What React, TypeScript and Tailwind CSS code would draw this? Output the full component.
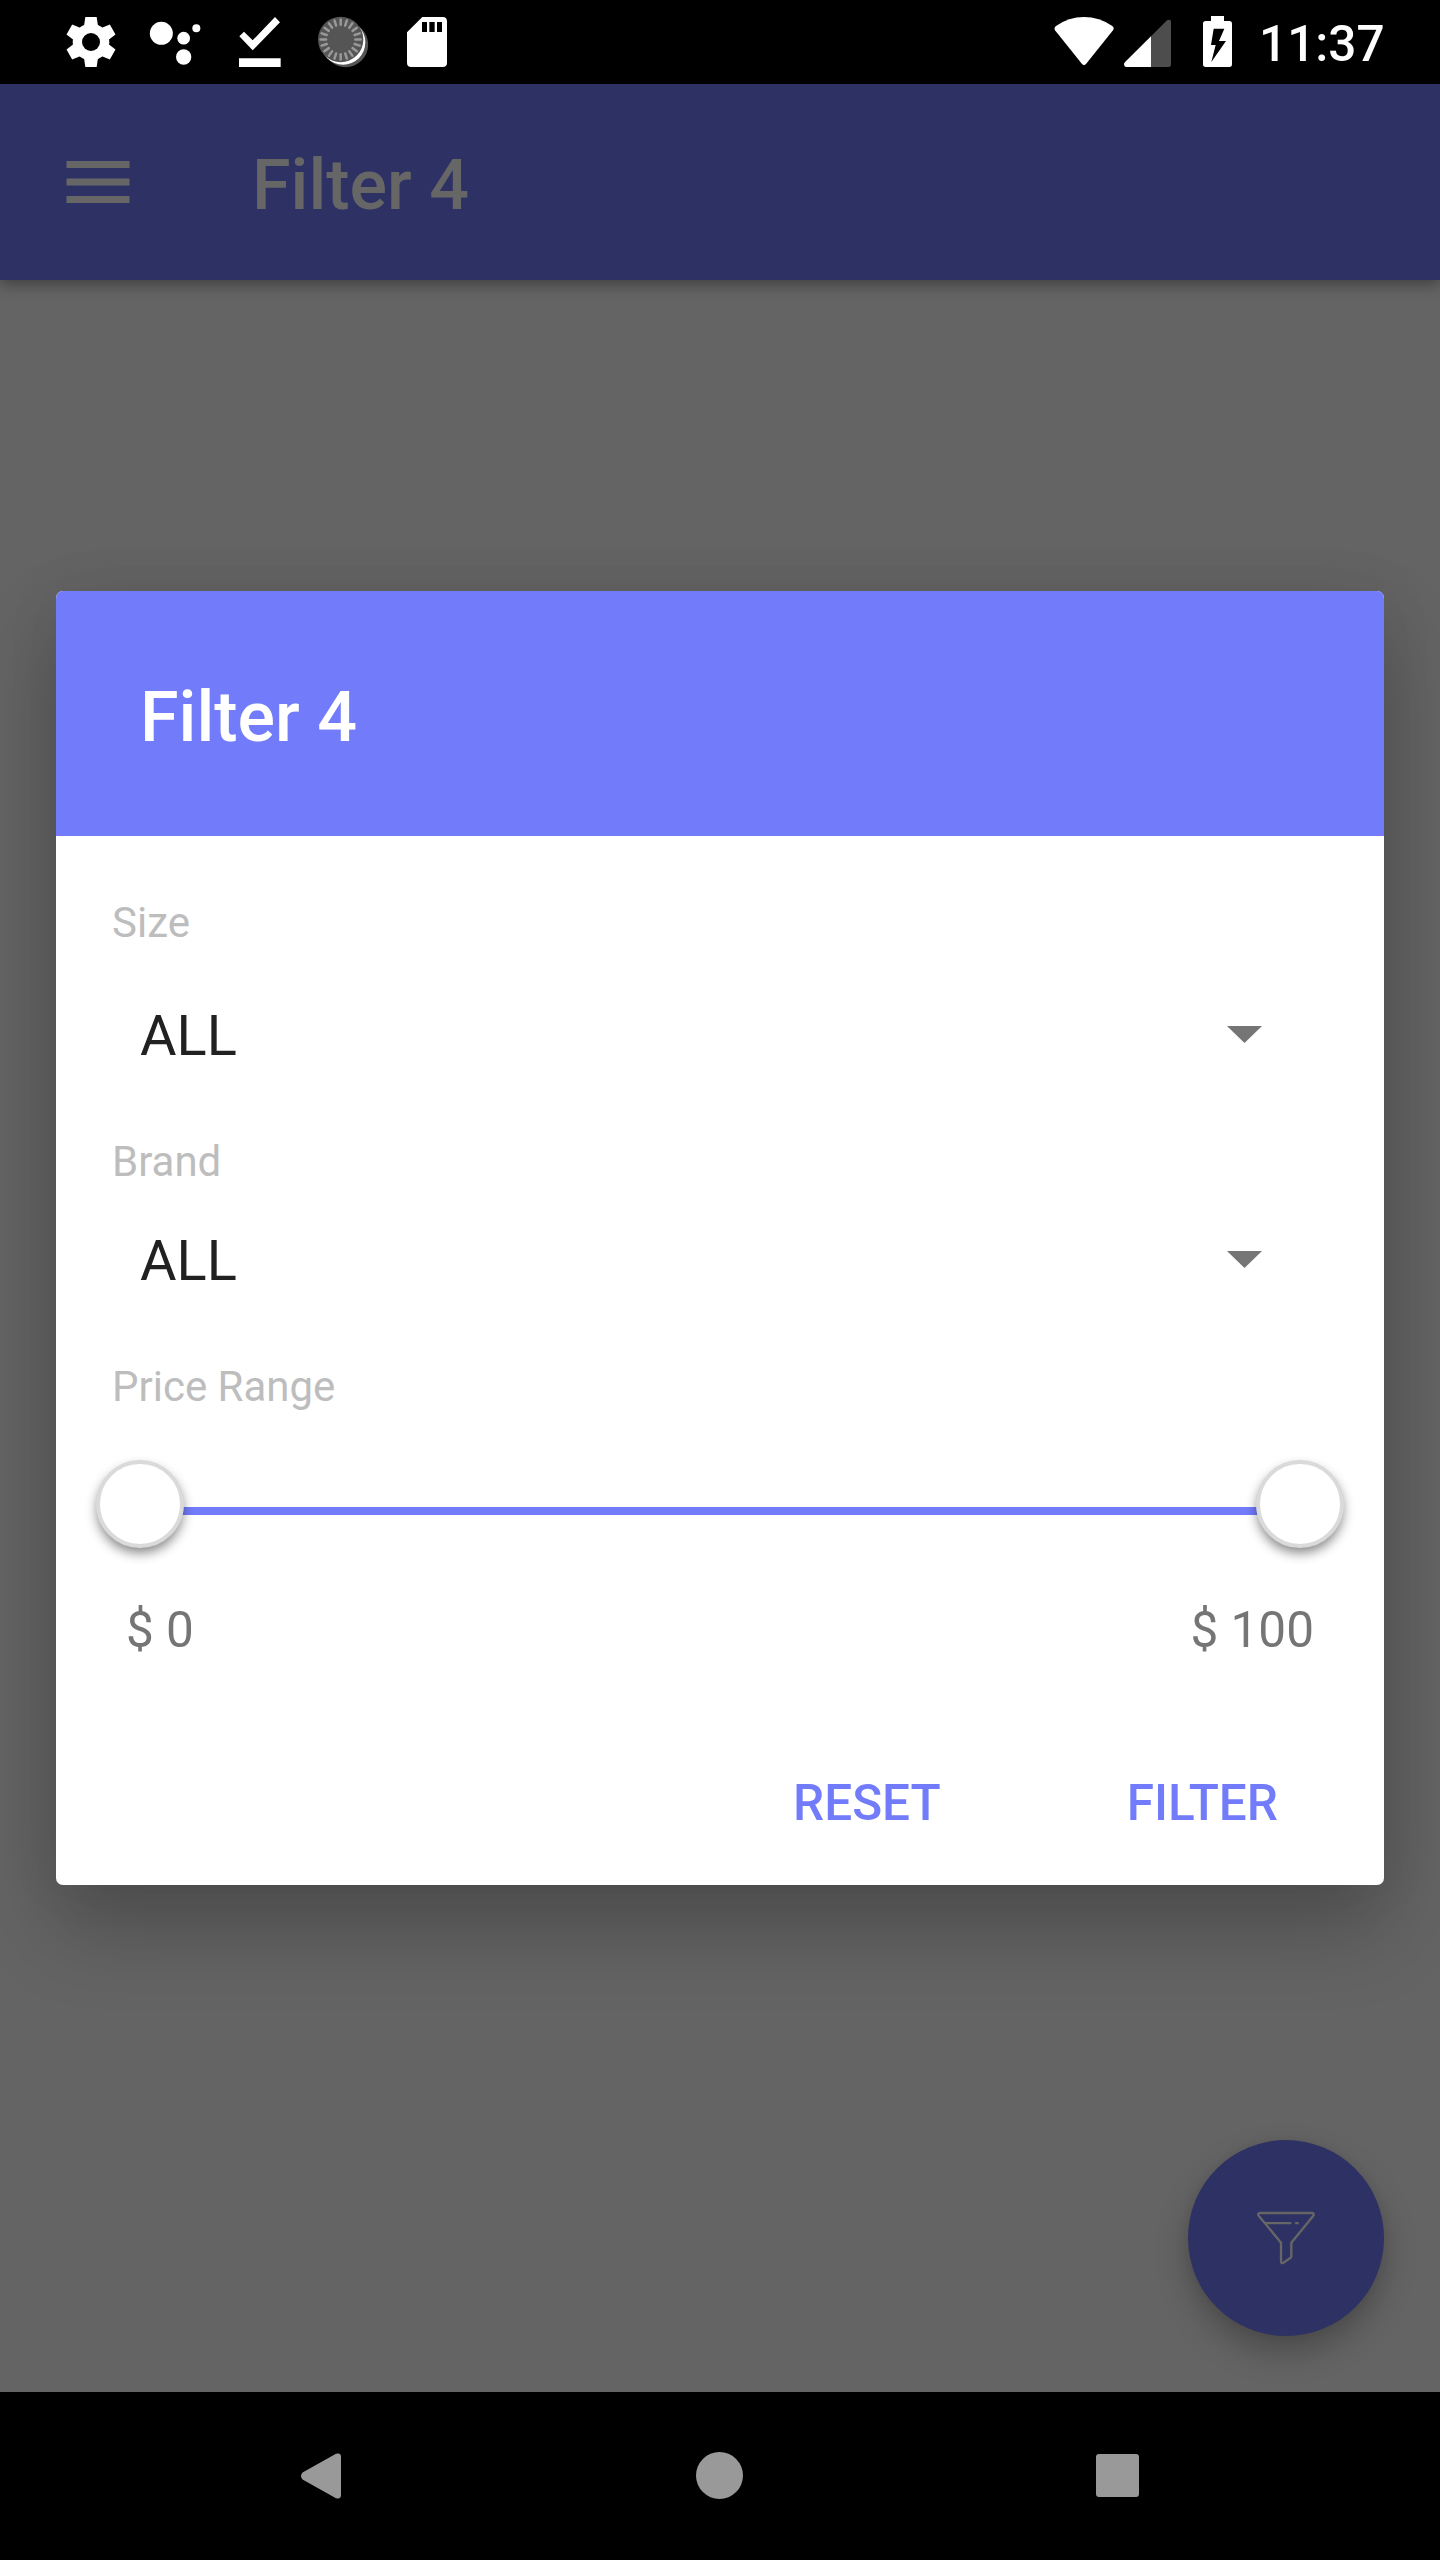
import React from "react";

const TOOTH = "-17,-75 17,-75 21,-48 21,48 17,75 -17,75 -21,48 -21,-48";

function StatusBar() {
  return (
    <header className="flex h-[84px] shrink-0 items-start justify-between bg-black text-white">
      <div className="flex pl-[66px] pt-[16px]">
        {/* settings */}
        <svg className="h-[52px] w-[52px]" viewBox="78 48 156 156">
          <g transform="translate(153 126)" fill="#fff">
            <circle r="55" />
            <polygon points={TOOTH} />
            <polygon points={TOOTH} transform="rotate(60)" />
            <polygon points={TOOTH} transform="rotate(120)" />
            <circle r="27" fill="#000" />
          </g>
        </svg>
        {/* assistant */}
        <svg className="ml-[31px] h-[52px] w-[52px]" viewBox="327 48 156 156" fill="#fff">
          <circle cx="364" cy="100" r="34.5" />
          <circle cx="431" cy="114.500" r="19" />
          <circle cx="431" cy="171" r="23" />
          <circle cx="469" cy="84.500" r="12" />
        </svg>
        {/* download done */}
        <svg className="ml-[36px] h-[52px] w-[52px]" viewBox="591 48 156 156" fill="#fff">
          <path d="M598 109L612 95L638 121L705 51L720 67L638 151ZM597 175H722V201H597Z" />
        </svg>
        {/* sync spinner */}
        <svg className="ml-[28px] h-[52px] w-[52px]" viewBox="831 48 156 156">
          <circle cx="917" cy="134" r="67.500" fill="#555" />
          <circle cx="909" cy="127" r="67" fill="#fff" />
          <circle cx="902" cy="118.500" r="68" fill="#555" />
          <g transform="translate(902 118.500)" stroke="#999" strokeWidth="7.500" strokeLinecap="round">
            {Array.from({ length: 20 }, (_, i) => (
              <path key={i} d="M0-60V-44" transform={`rotate(${i * 18})`} />
            ))}
          </g>
        </svg>
        {/* sd card */}
        <svg className="ml-[37px] h-[52px] w-[52px]" viewBox="1098 48 156 156">
          <path
            fill="#fff"
            fillRule="evenodd"
            d="M1147 51H1208Q1221 51 1221 64V188Q1221 201 1208 201H1114Q1101 201 1101 188V97ZM1146 66V96H1161V66ZM1168 66V96H1184V66ZM1191 66V96H1206V66Z"
          />
        </svg>
      </div>
      <div className="flex pr-[56px] pt-[15px]">
        {/* wifi */}
        <svg className="h-[54px] w-[62px]" viewBox="69 45 186 162" fill="#fff">
          <path d="M75 91Q71 84 78 78Q116 51 162 51Q208 51 247 78Q254 84 249 91L168 192Q162 199 156 192Z" />
        </svg>
        {/* cell signal */}
        <svg className="ml-[8px] h-[54px] w-[50px]" viewBox="279 45 150 162">
          <path fill="#4d4d4d" d="M363 109L411 61Q423 55 423 66V194Q423 201 416 201H363Z" />
          <path fill="#fff" d="M363 109V201H289Q282 200 282 191Q282 189 286 185Z" />
        </svg>
        {/* battery charging */}
        <svg className="ml-[28px] h-[54px] w-[34px]" viewBox="513 45 102 162">
          <path
            fill="#fff"
            fillRule="evenodd"
            d="M543 48H582V63H598Q606 63 606 71V193Q606 201 598 201H527Q519 201 519 193V71Q519 63 527 63H543ZM551 86L543 135H557L544 186L588 123H567L583 86Z"
          />
        </svg>
        <span className="ml-[24px] w-[125px] whitespace-nowrap text-right text-[49.5px] font-medium leading-[58px]">11:37</span>
      </div>
    </header>
  );
}

function AppBar() {
  return (
    <div className="z-10 flex h-[196px] shrink-0 bg-[#2e3163] text-[#666666] shadow-[0_4px_14px_rgba(0,0,0,0.38)]">
      <svg className="ml-[66px] mt-[77px] h-[42px] w-[64px]" viewBox="0 0 64 42" fill="#666">
        <path d="M0.500 0H63.500V7H0.500ZM0.500 17.500H63.500V24.500H0.500ZM0.500 35H63.500V42H0.500Z" />
      </svg>
      <h1 className="ml-[122px] mt-[60px] text-[70px] font-medium leading-[82px]">Filter 4</h1>
    </div>
  );
}

function Select({ value }: { value: string }) {
  return (
    <div className="flex h-[64px] items-start justify-between pl-[84px] pr-[122.500px] text-[56px] leading-[64px] text-[#212121]">
      <span>{value}</span>
      <svg className="mt-[22px] h-[17px] w-[35px]" viewBox="0 0 35 17">
        <path d="M0 0H35L17.500 17Z" fill="#757575" />
      </svg>
    </div>
  );
}

function Thumb() {
  return (
    <span className="z-10 size-[88px] shrink-0 rounded-full border-4 border-[#dadada] bg-white shadow-[0_6px_12px_-1px_rgba(0,0,0,0.48)]" />
  );
}

function FilterDialog() {
  return (
    <section className="absolute left-[56px] top-[591px] flex h-[1294px] w-[1328px] flex-col rounded-[7px] bg-white shadow-[0_42px_84px_rgba(0,0,0,0.24),0_0_60px_rgba(0,0,0,0.06)]">
      <div className="h-[245px] shrink-0 rounded-t-[7px] bg-[#727cfb] pl-[84px] pt-[85px]">
        <h2 className="text-[70px] font-medium leading-[82px] text-white">Filter 4</h2>
      </div>
      <label className="mt-[59px] pl-[56px] text-[42px] leading-[56px] text-[#bdbdbd]">Size</label>
      <div className="mt-[53px]">
        <Select value="ALL" />
      </div>
      <label className="mt-[66px] pl-[56px] text-[42px] leading-[56px] text-[#bdbdbd]">Brand</label>
      <div className="mt-[39px]">
        <Select value="ALL" />
      </div>
      <label className="mt-[66px] pl-[56px] text-[42px] leading-[56px] text-[#bdbdbd]">Price Range</label>
      <div className="mx-[40px] mt-[45px] flex h-[88px] items-start">
        <Thumb />
        <span className="-mx-[4px] mt-[47px] h-[8px] flex-1 bg-[#727cfb]" />
        <Thumb />
      </div>
      <div className="mt-[54px] flex justify-between pl-[70px] pr-[70px] text-[49.5px] leading-[56px] text-[#757575]">
        <span>$ 0</span>
        <span>$ 100</span>
      </div>
      <div className="mt-[117px] flex justify-end gap-[186px] pr-[106px] text-[49.5px] font-medium leading-[56px] text-[#727cfb]">
        <button>RESET</button>
        <button>FILTER</button>
      </div>
    </section>
  );
}

function FilterFab() {
  return (
    <button className="absolute left-[1188px] top-[2140px] size-[196px] rounded-full bg-[#2e3163] shadow-[0_16px_32px_rgba(0,0,0,0.26),0_0_10px_rgba(0,0,0,0.06)]">
      <svg className="size-full" viewBox="84 90 588 588" fill="none" stroke="#666" strokeWidth="7" strokeLinejoin="round" strokeLinecap="round">
        <path d="M298 309H458Q463 311 460 317L394 398V438Q394 442 390 445L369 459Q363 460 363 454V398L296 317Q292 311 298 309ZM318 339.500H391M408 339.500H413" />
      </svg>
    </button>
  );
}

function NavBar() {
  return (
    <nav className="flex h-[168px] shrink-0 items-start bg-black pl-[301px] pt-[60px]">
      <svg className="mt-px h-[46px] w-[41px]" viewBox="0 0 41 46">
        <path fill="#999" d="M1.500 19.500L35 0.800Q40 -0.500 40 4V42Q40 46.500 35 45.200L1.500 26.500Q-1.500 23 1.500 19.500Z" />
      </svg>
      <span className="ml-[354px] size-[47px] rounded-full bg-[#999999]" />
      <span className="ml-[353px] mt-[2px] h-[43px] w-[43px] rounded-[3px] bg-[#999999]" />
    </nav>
  );
}

export default function App() {
  return (
    <div className="relative flex h-[2560px] w-[1440px] flex-col overflow-hidden bg-[#646464] font-['Roboto',sans-serif]">
      <StatusBar />
      <AppBar />
      <main className="flex-1" />
      <NavBar />
      <FilterFab />
      <FilterDialog />
    </div>
  );
}
